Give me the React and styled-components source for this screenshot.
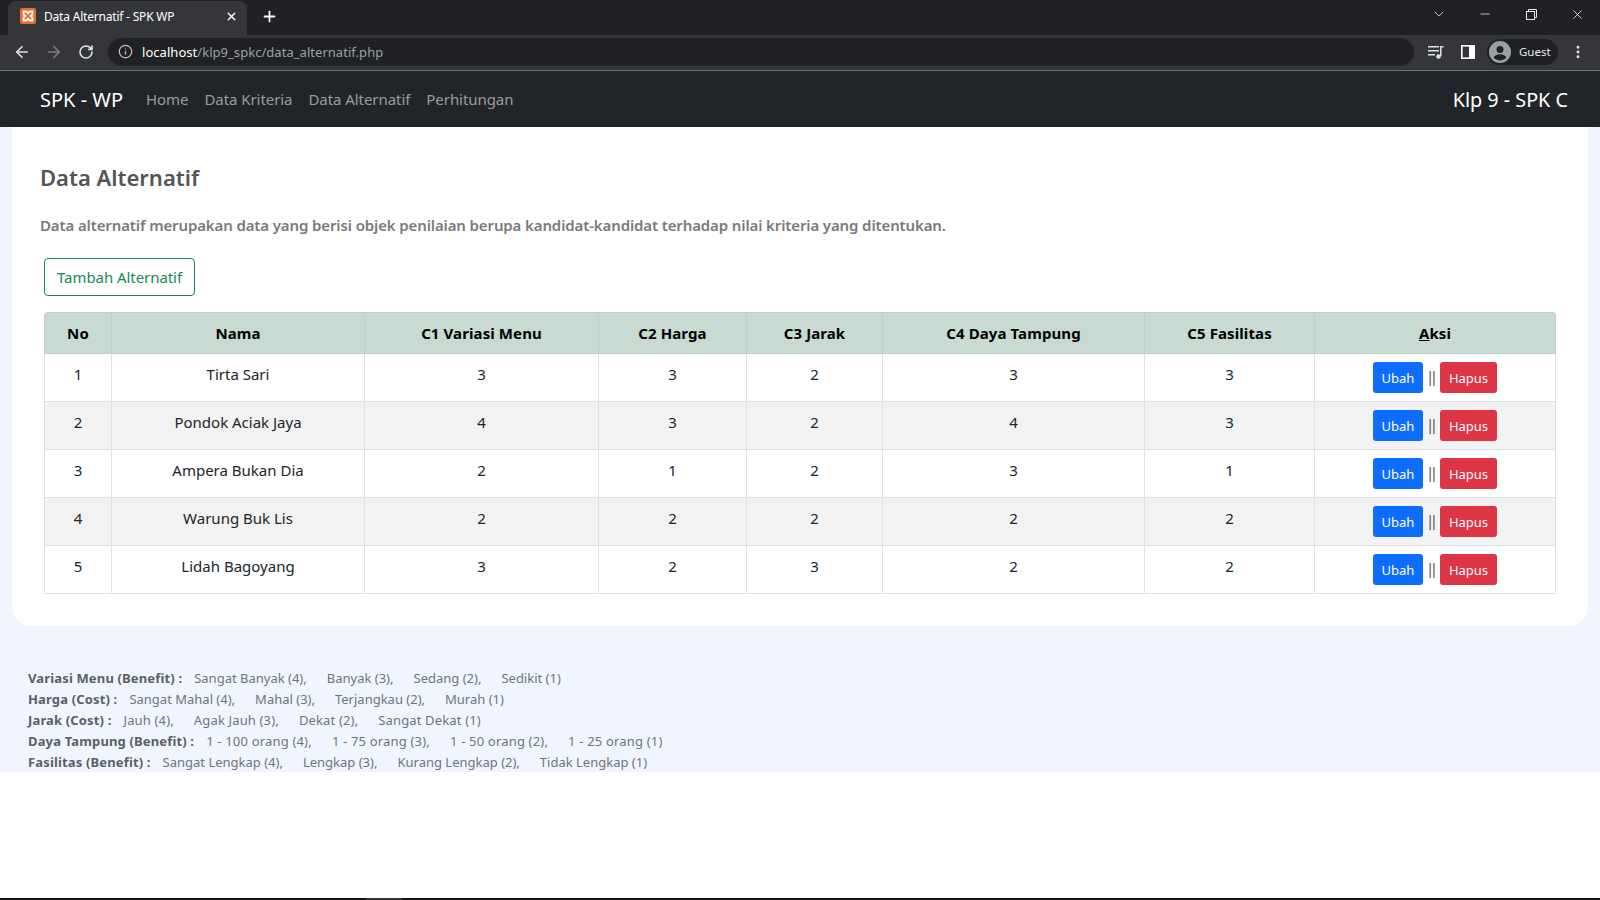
import React from 'react';
import styled, { createGlobalStyle } from 'styled-components';
import { ArrowLeft, ArrowRight, RotateCw, Info, Plus, X, ChevronDown, Minus, MoreVertical } from 'lucide-react';

const GlobalStyle = createGlobalStyle`
  html, body { margin: 0; padding: 0; background: #fff; }
  body { font-family: "Noto Sans", "Open Sans", sans-serif; overflow: hidden; }
  * { box-sizing: border-box; }
`;

const Page = styled.div`
  height: 900px;
  display: flex;
  flex-direction: column;
`;

/* browser chrome */
const TabStrip = styled.div`
  height: 35px;
  background: #202124;
  display: flex;
  align-items: flex-end;
  padding-left: 8px;
  color: #fff;
`;

const Tab = styled.div`
  width: 239px;
  height: 34px;
  background: #35363a;
  border-radius: 8px 8px 0 0;
  display: flex;
  align-items: center;
  padding: 0 9px 4px 12px;
  font-size: 12px;
`;

const TabTitle = styled.span`
  flex: 1;
  margin-left: 8px;
  letter-spacing: -0.2px;
`;

const NewTab = styled.div`
  margin-left: 14px;
  height: 34px;
  padding-bottom: 4px;
  display: flex;
  align-items: center;
`;

const WindowControls = styled.div`
  margin-left: auto;
  height: 28px;
  align-self: flex-start;
  display: flex;
  align-items: center;
  color: #e8e9ec;
`;

const WindowButton = styled.div`
  width: 46px;
  display: flex;
  justify-content: center;
`;

const Toolbar = styled.div`
  height: 35px;
  background: #35363a;
  display: flex;
  align-items: center;
  padding: 0 14px 2px 13px;
  gap: 14px;
  color: #dee1e6;
`;

const ReloadSlot = styled.span`
  display: flex;
  margin-left: 1px;
`;

const UrlBar = styled.div`
  flex: 1;
  height: 28px;
  border-radius: 14px;
  background: #202124;
  display: flex;
  align-items: center;
  padding-left: 10px;
  font-size: 13px;
  letter-spacing: 0.04px;
  color: #9aa0a6;
`;

const UrlHost = styled.span`
  color: #fff;
  margin-left: 9px;
`;

const ToolIcons = styled.div`
  display: flex;
  align-items: center;
  gap: 12px;
`;

const QueueSlot = styled.span`
  display: flex;
  margin-right: 5px;
`;

const GuestChip = styled.div`
  width: 71px;
  height: 26px;
  border-radius: 13px;
  background: #202124;
  display: flex;
  align-items: center;
  gap: 8px;
  padding-left: 2px;
  font-size: 11.5px;
  color: #e8eaed;
`;

const ChromeLine = styled.div`
  height: 1px;
  background: #6e7074;
`;

/* site navbar */
const Navbar = styled.nav`
  height: 56px;
  background: #212529;
  display: flex;
  align-items: center;
  padding: 0 32px 0 40px;
`;

const Brand = styled.a`
  font-size: 20px;
  color: #fff;
  margin-right: 23px;
`;

const NavLink = styled.a`
  font-size: 15px;
  letter-spacing: -0.06px;
  color: rgba(255, 255, 255, 0.55);
  margin-right: 16px;
`;

const NavRight = styled.span`
  margin-left: auto;
  font-size: 19.8px;
  color: #fff;
`;

/* content */
const Body = styled.main`
  height: 645px;
  background: #f1f6fe;
  overflow: hidden;
`;

const Card = styled.section`
  margin: 0 12px;
  height: 499px;
  background: #fff;
  border-radius: 0 0 20px 20px;
  padding: 34px 32px 0 28px;
`;

const Title = styled.h1`
  margin: 0 0 20px;
  font-size: 22px;
  line-height: 32px;
  font-weight: 600;
  color: #555;
`;

const Lead = styled.p`
  margin: 0 0 21px;
  font-size: 15px;
  line-height: 24px;
  font-weight: 600;
  letter-spacing: -0.12px;
  color: #7a7a7a;
`;

const AddButton = styled.button`
  margin: 0 0 16px 4px;
  height: 38px;
  width: 151px;
  padding: 0;
  display: block;
  background: #fff;
  border: 1px solid #198754;
  border-radius: 4px;
  font: inherit;
  font-size: 15px;
  letter-spacing: -0.06px;
  color: #198754;
`;

const Table = styled.table`
  margin-left: 4px;
  width: 1512px;
  table-layout: fixed;
  border-collapse: separate;
  border-spacing: 0;
  text-align: center;
  font-size: 15px;
  line-height: 24px;
  color: #212529;
`;

const Th = styled.th`
  height: 42px;
  padding: 0;
  background: #c8dad1;
  color: #000;
  font-weight: 700;
  letter-spacing: 0.1px;
  border-top: 1px solid #bdcfc6;
  border-bottom: 1px solid #bdcfc6;
  border-right: 1px solid #bdcfc6;
  &:first-child { border-left: 1px solid #bdcfc6; border-top-left-radius: 4px; }
  &:last-child { border-top-right-radius: 4px; }
`;

const Td = styled.td`
  height: 48px;
  padding: 8px 0 0;
  vertical-align: top;
  background: ${p => (p.$odd ? '#f2f2f2' : '#fff')};
  border-bottom: 1px solid #dee2e6;
  border-right: 1px solid #dee2e6;
  &:first-child { border-left: 1px solid #dee2e6; }
`;

const ActionCell = styled.div`
  display: flex;
  justify-content: center;
  align-items: center;
  gap: 5px;
`;

const Bars = styled.span`
  width: 7px;
  margin-left: -2px;
  margin-right: 2px;
  padding-bottom: 3px;
  font-size: 15px;
  letter-spacing: -4.5px;
  color: #555;
`;

const RowButton = styled.button`
  height: 31px;
  width: ${p => p.$w}px;
  padding: 0;
  border: 0;
  border-radius: 3px;
  font: inherit;
  font-size: 13px;
  color: #fff;
  background: ${p => p.$bg};
`;

const Legend = styled.div`
  margin-top: 42px;
  padding-left: 28px;
  font-size: 13px;
  line-height: 21px;
  color: #6c757d;
`;

const LegendLine = styled.div`
  display: flex;
  white-space: pre;
`;

const LegendLabel = styled.b`
  font-weight: 700;
  letter-spacing: 0.15px;
  color: #5a5f66;
  margin-right: 12px;
`;

const LegendItem = styled.span`
  margin-right: 20px;
  letter-spacing: ${p => p.$ls}px;
`;

const Spacer = styled.div`
  flex: 1;
`;

const Taskbar = styled.div`
  height: 2px;
  background: #111;
  display: flex;
  padding-left: 366px;
`;

const TaskbarApp = styled.div`
  width: 36px;
  background: #333;
`;

const Favicon = () => (
  <svg width="16" height="16" viewBox="0 0 16 16">
    <rect width="16" height="16" rx="2.500" fill="#e8702a" />
    <path d="M3.500 3.500h3l1.500 2 1.500-2h3v3L10.500 8l2 1.500v3h-3L8 10.500l-1.500 2h-3v-3l2-1.500-2-1.500z" fill="none" stroke="#fff" strokeWidth="1.800" strokeLinejoin="round" />
  </svg>
);

const QueueIcon = () => (
  <svg width="16" height="14" viewBox="0 0 16 14" fill="#dee1e6">
    <rect x="0" y="1" width="11" height="1.500" />
    <rect x="0" y="5" width="11" height="1.500" />
    <rect x="0" y="9" width="7" height="1.500" />
    <circle cx="10.500" cy="11.500" r="2.300" />
    <rect x="12" y="1" width="1.500" height="10" />
    <rect x="12" y="1" width="3.500" height="1.500" />
  </svg>
);

const SidePanelIcon = () => (
  <svg width="14" height="14" viewBox="0 0 14 14">
    <rect x="0.800" y="0.800" width="12.400" height="12.400" fill="#35363a" stroke="#fff" strokeWidth="1.600" />
    <rect x="8" y="0" width="6" height="14" fill="#fff" />
  </svg>
);

const RestoreIcon = () => (
  <svg width="11" height="11" viewBox="0 0 11 11" fill="none" stroke="#e8e9ec">
    <rect x="0.500" y="2.500" width="8" height="8" />
    <path d="M2.500 2.500v-2h8v8h-2" />
  </svg>
);

const GuestAvatar = () => (
  <svg width="22" height="22" viewBox="0 0 22 22">
    <circle cx="11" cy="11" r="11" fill="#9aa0a6" />
    <circle cx="11" cy="8.500" r="3.500" fill="#202124" />
    <path d="M4.500 16.500c1.500-2.500 4-3.300 6.500-3.300s5 .8 6.500 3.300c-1.600 1.800-4 2.900-6.500 2.900s-4.900-1.100-6.500-2.900z" fill="#202124" />
  </svg>
);

const columns = [68, 253, 234, 148, 136, 262, 170, 241];
const heads = ['No', 'Nama', 'C1 Variasi Menu', 'C2 Harga', 'C3 Jarak', 'C4 Daya Tampung', 'C5 Fasilitas'];

const Col = styled.col`
  width: ${p => p.$w}px;
`;

const rows = [
  [1, 'Tirta Sari', 3, 3, 2, 3, 3],
  [2, 'Pondok Aciak Jaya', 4, 3, 2, 4, 3],
  [3, 'Ampera Bukan Dia', 2, 1, 2, 3, 1],
  [4, 'Warung Buk Lis', 2, 2, 2, 2, 2],
  [5, 'Lidah Bagoyang', 3, 2, 3, 2, 2],
];

const legend = [
  ['Variasi Menu (Benefit) :', 0, ['Sangat Banyak (4),', 'Banyak (3),', 'Sedang (2),', 'Sedikit (1)']],
  ['Harga (Cost) :', 0, ['Sangat Mahal (4),', 'Mahal (3),', 'Terjangkau (2),', 'Murah (1)']],
  ['Jarak (Cost) :', 0.15, ['Jauh (4),', 'Agak Jauh (3),', 'Dekat (2),', 'Sangat Dekat (1)']],
  ['Daya Tampung (Benefit) :', 0.18, ['1 - 100 orang (4),', '1 - 75 orang (3),', '1 - 50 orang (2),', '1 - 25 orang (1)']],
  ['Fasilitas (Benefit) :', 0, ['Sangat Lengkap (4),', 'Lengkap (3),', 'Kurang Lengkap (2),', 'Tidak Lengkap (1)']],
];

export default function App() {
  return (
    <Page>
      <GlobalStyle />
      <TabStrip>
        <Tab>
          <Favicon />
          <TabTitle>Data Alternatif - SPK WP</TabTitle>
          <X size={13} strokeWidth={2.500} />
        </Tab>
        <NewTab><Plus size={17} strokeWidth={2.500} /></NewTab>
        <WindowControls>
          <WindowButton><ChevronDown size={16} strokeWidth={1.200} /></WindowButton>
          <WindowButton><Minus size={14} strokeWidth={1.400} /></WindowButton>
          <WindowButton><RestoreIcon /></WindowButton>
          <WindowButton><X size={15} strokeWidth={1.400} /></WindowButton>
        </WindowControls>
      </TabStrip>
      <Toolbar>
        <ArrowLeft size={18} strokeWidth={2.200} />
        <ArrowRight size={18} strokeWidth={2.200} color="#7d7f83" />
        <ReloadSlot><RotateCw size={16} strokeWidth={2.400} /></ReloadSlot>
        <UrlBar>
          <Info size={15} color="#bdc1c6" />
          <UrlHost>localhost</UrlHost>/klp9_spkc/data_alternatif.php
        </UrlBar>
        <ToolIcons>
          <QueueSlot><QueueIcon /></QueueSlot>
          <SidePanelIcon />
          <GuestChip><GuestAvatar />Guest</GuestChip>
          <MoreVertical size={16} strokeWidth={2.400} />
        </ToolIcons>
      </Toolbar>
      <ChromeLine />
      <Navbar>
        <Brand>SPK - WP</Brand>
        <NavLink>Home</NavLink>
        <NavLink>Data Kriteria</NavLink>
        <NavLink>Data Alternatif</NavLink>
        <NavLink>Perhitungan</NavLink>
        <NavRight>Klp 9 - SPK C</NavRight>
      </Navbar>
      <Body>
        <Card>
          <Title>Data Alternatif</Title>
          <Lead>Data alternatif merupakan data yang berisi objek penilaian berupa kandidat-kandidat terhadap nilai kriteria yang ditentukan.</Lead>
          <AddButton>Tambah Alternatif</AddButton>
          <Table>
            <colgroup>
              {columns.map((w, i) => <Col key={i} $w={w} />)}
            </colgroup>
            <thead>
              <tr>
                {heads.map(h => <Th key={h}>{h}</Th>)}
                <Th><u>A</u>ksi</Th>
              </tr>
            </thead>
            <tbody>
              {rows.map((row, r) => (
                <tr key={row[0]}>
                  {row.map((v, i) => <Td key={i} $odd={r % 2 === 1}>{v}</Td>)}
                  <Td $odd={r % 2 === 1}>
                    <ActionCell>
                      <RowButton $w={50} $bg="#0d6efd">Ubah</RowButton>
                      <Bars>||</Bars>
                      <RowButton $w={57} $bg="#dc3545">Hapus</RowButton>
                    </ActionCell>
                  </Td>
                </tr>
              ))}
            </tbody>
          </Table>
        </Card>
        <Legend>
          {legend.map(([label, ls, items]) => (
            <LegendLine key={label}>
              <LegendLabel>{label}</LegendLabel>
              {items.map(t => <LegendItem key={t} $ls={ls}>{t}</LegendItem>)}
            </LegendLine>
          ))}
        </Legend>
      </Body>
      <Spacer />
      <Taskbar><TaskbarApp /></Taskbar>
    </Page>
  );
}
